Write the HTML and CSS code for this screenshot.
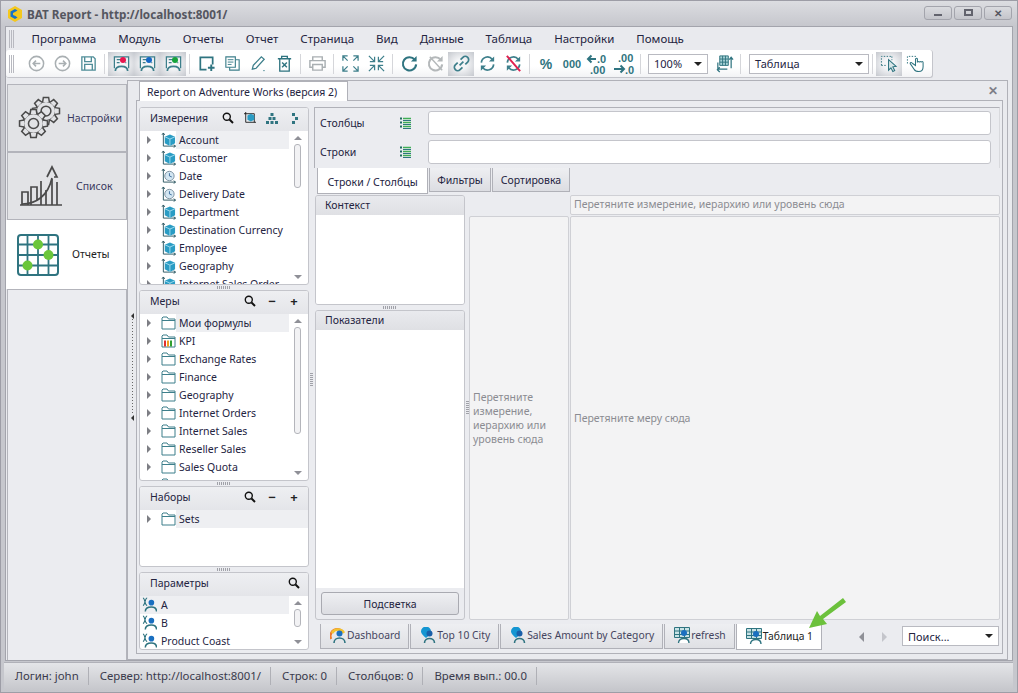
FILE: index.html
```html
<!DOCTYPE html>
<html lang="en">
<head>
  <meta charset="UTF-8" />
  <title>BAT Report</title>
  <link rel="stylesheet" href="styles.css">
</head>
<body>
  <svg class="defs" width="0" height="0">
    <defs>
      <symbol id="i-back" viewBox="0 0 20 20"><circle cx="10" cy="10" r="7.5" fill="none" stroke="#a9afb2" stroke-width="1.6"/><path d="M14 10H6.5M9.5 7L6.5 10l3 3" fill="none" stroke="#a9afb2" stroke-width="1.6"/></symbol>
      <symbol id="i-forward" viewBox="0 0 20 20"><circle cx="10" cy="10" r="7.5" fill="none" stroke="#a9afb2" stroke-width="1.6"/><path d="M6 10h7.5M10.5 7l3 3-3 3" fill="none" stroke="#a9afb2" stroke-width="1.6"/></symbol>
      <symbol id="i-save" viewBox="0 0 20 20"><path d="M3 3h12l2 2v12H3zM6 3v5h7V3M6 17v-6h8v6" fill="none" stroke="#4f8d98" stroke-width="1.4"/></symbol>
      <symbol id="i-sheet" viewBox="0 0 20 20"><path d="M2.500 15V3h15v12M5 6h5M5 9h3M15 9h-1" fill="none" stroke="#3d7f8b" stroke-width="1.3"/><path d="M3.500 18c0-4 3-5 6.500-5s6.500 1 6.500 5" fill="none" stroke="#3d7f8b" stroke-width="1.8"/></symbol>
      <symbol id="i-new" viewBox="0 0 20 20"><path d="M10 16.500H3.500V3.500h13V11" fill="none" stroke="#2f7480" stroke-width="1.8"/><path d="M15 11v7M11.500 14.500h7" fill="none" stroke="#2f7480" stroke-width="2"/></symbol>
      <symbol id="i-copy" viewBox="0 0 20 20"><path d="M3 3h10v11H3z" fill="none" stroke="#3d7f8b" stroke-width="1.2"/><path d="M13 6h4v11H7v-3" fill="none" stroke="#3d7f8b" stroke-width="1.2"/><path d="M5 6h6M5 8.500h6M5 11h4" stroke="#3d7f8b"/></symbol>
      <symbol id="i-edit" viewBox="0 0 20 20"><path d="M3.500 16l1-4L13 3l3 2.500L7.500 15z" fill="none" stroke="#3d7f8b" stroke-width="1.3"/><path d="M15 17.500h1.500" stroke="#3d7f8b"/></symbol>
      <symbol id="i-delete" viewBox="0 0 20 20"><path d="M5 5v13h10V5M3 5h14M7 5V2.500h6V5" fill="none" stroke="#2f7480" stroke-width="1.4"/><path d="M7.500 9l5 5M12.500 9l-5 5" stroke="#2f7480" stroke-width="1.500"/></symbol>
      <symbol id="i-print" viewBox="0 0 20 20"><path d="M5 7V3h10v4M5 14H2V7h16v7h-3M5 11h10v6H5z" fill="none" stroke="#a9afb2" stroke-width="1.5"/></symbol>
      <symbol id="i-expand" viewBox="0 0 20 20"><path d="M2 7V2h5M2 2l5 5M18 7V2h-5M18 2l-5 5M2 13v5h5M2 18l5-5M18 13v5h-5M18 18l-5-5" fill="none" stroke="#3d7f8b" stroke-width="1.300"/></symbol>
      <symbol id="i-collapse" viewBox="0 0 20 20"><path d="M3 8h5V3M2 2l6 6M17 8h-5V3M18 2l-6 6M3 12h5v5M2 18l6-6M17 12h-5v5M18 18l-6-6" fill="none" stroke="#3d7f8b" stroke-width="1.300"/></symbol>
      <symbol id="i-refresh" viewBox="0 0 20 20"><path d="M15.500 6A7 7 0 1 0 17 11" fill="none" stroke="#2f7480" stroke-width="2.200"/><path d="M17.500 2v6h-6z" fill="#2f7480"/></symbol>
      <symbol id="i-refresh-off" viewBox="0 0 20 20"><path d="M15.500 6A7 7 0 1 0 17 11" fill="none" stroke="#b4b8ba" stroke-width="2.200"/><path d="M17.500 2v6h-6z" fill="#b4b8ba"/><path d="M4 3l13 14" stroke="#b4b8ba" stroke-width="1.500"/></symbol>
      <symbol id="i-link" viewBox="0 0 20 20"><path d="M8 12l4-4M9 6l2.500-2.500a3 3 0 0 1 5 5L14 11M11 14l-2.500 2.500a3 3 0 0 1-5-5L6 9" fill="none" stroke="#3d7f8b" stroke-width="1.800"/></symbol>
      <symbol id="i-sync" viewBox="0 0 20 20"><path d="M3.500 9A6.500 6.500 0 0 1 15 5.500M16.500 11A6.500 6.500 0 0 1 5 14.500" fill="none" stroke="#3d7f8b" stroke-width="1.800"/><path d="M17 2.500V8h-5.500zM3 17.500V12h5.500z" fill="#3d7f8b"/></symbol>
      <symbol id="i-sync-off" viewBox="0 0 20 20"><path d="M3.500 9A6.500 6.500 0 0 1 15 5.500M16.500 11A6.500 6.500 0 0 1 5 14.500" fill="none" stroke="#3d7f8b" stroke-width="1.800"/><path d="M17 2.500V8h-5.500zM3 17.500V12h5.500z" fill="#3d7f8b"/><path d="M3 2l14 16" stroke="#e0204f" stroke-width="2"/></symbol>
      <symbol id="i-dec-more" viewBox="0 0 24 22"><path d="M10 6H2M5.500 2.500L2 6l3.500 3.500" fill="none" stroke="#2f7480" stroke-width="2"/><text x="11" y="10" class="svg-num">.0</text><text x="4" y="21" class="svg-num">.00</text></symbol>
      <symbol id="i-dec-less" viewBox="0 0 24 22"><text x="6" y="9" class="svg-num">.00</text><path d="M2 16h10M8.500 12.500L12 16l-3.500 3.500" fill="none" stroke="#2f7480" stroke-width="2"/><text x="13" y="21" class="svg-num">.0</text></symbol>
      <symbol id="i-swap" viewBox="0 0 20 20"><path d="M5 2h9v10H5zM8 2v10M11 2v10M5 5.300h9M5 8.600h9" fill="#a9d4d8" stroke="#2f7480"/><path d="M3 9v7h10M5 14l-2.500 2.500L5 19" fill="none" stroke="#2f7480" stroke-width="1.300"/><path d="M17 15V4M15 6l2-2.500L19 6" fill="none" stroke="#2f7480" stroke-width="1.300"/></symbol>
      <symbol id="i-select" viewBox="0 0 20 20"><path d="M1.500 12V2.500h11" fill="none" stroke="#2f7480" stroke-dasharray="1.500 1.500"/><path d="M1.500 12h5M12.500 2.500v4" fill="none" stroke="#2f7480" stroke-dasharray="1.500 1.500"/><path d="M9 6l8 7-3.500.5 2 4-2 1-2-4L9 17z" fill="#d9e6e8" stroke="#2f7480" stroke-width="1.100"/></symbol>
      <symbol id="i-hand" viewBox="0 0 20 20"><path d="M1.500 10V2.500h9" fill="none" stroke="#2f7480" stroke-dasharray="1.500 1.500"/><path d="M7 10c-2-2-3.500-.5-2 1l3.500 5c1 2 3 2.500 5 2.500 3 0 4.500-2 4.500-5V9c0-1.500-2-1.500-2 0 0-1.500-2-1.500-2 0 0-1.500-2-1.500-2 0V5.500c0-1.500-2-1.500-2 0V12z" fill="#fff" stroke="#2f7480" stroke-width="1.100"/></symbol>
      <symbol id="i-gear" viewBox="-20 -20 40 40">
        <circle r="13" fill="#e2e3e6" stroke="#4a4a4a" stroke-width="2"/>
        <g id="teeth">
          <path id="tooth" d="M-4.500-12L-3.500-18H3.500L4.500-12" fill="#e2e3e6" stroke="#4a4a4a" stroke-width="2"/>
          <use href="#tooth" transform="rotate(45)"/><use href="#tooth" transform="rotate(90)"/><use href="#tooth" transform="rotate(135)"/>
          <use href="#tooth" transform="rotate(180)"/><use href="#tooth" transform="rotate(225)"/><use href="#tooth" transform="rotate(270)"/><use href="#tooth" transform="rotate(315)"/>
        </g>
        <circle r="6.500" fill="none" stroke="#4a4a4a" stroke-width="2"/>
      </symbol>
      <symbol id="i-cube" viewBox="0 0 16 17"><path d="M2.500 1v14h13M1 3l1.500-2L4 3M13.500 13.500l2 1.500-2 1.500" fill="none" stroke="#2a5560"/><path d="M9.500 2.500L15 5v7l-5.500 3L4 12V5z" fill="#2a9cc4"/><path d="M4 5l5.500 2.500L15 5M9.500 7.500V15" fill="none" stroke="#a5dcee"/></symbol>
      <symbol id="i-clock" viewBox="0 0 16 17"><path d="M2.500 1v14h13M1 3l1.500-2L4 3M13.500 13.500l2 1.500-2 1.500" fill="none" stroke="#2a5560"/><circle cx="9" cy="8.500" r="5" fill="#d3e6f2" stroke="#7b8f9e"/><path d="M9 5.500v3l2.500 1" fill="none" stroke="#3e6f9e"/></symbol>
      <symbol id="i-folder" viewBox="0 0 15 15"><path d="M1 13.500V2.500l1-1h4l1.500 2H14v10zM1 5h13" fill="#fff" stroke="#3d7f8b"/></symbol>
      <symbol id="i-kpi" viewBox="0 0 15 15"><path d="M1 13.500V2.500l1-1h4l1.500 2H14v10zM1 5h13" fill="#fff" stroke="#3d7f8b"/><path d="M3 7h2v6H3z" fill="#e03030"/><path d="M6 7h2v6H6z" fill="#f0a020"/><path d="M9 7h2v6H9z" fill="#30a030"/></symbol>
      <symbol id="i-param" viewBox="0 0 16 16"><path d="M1 .5c2.500 0 1.500 8 4.500 8M5.500 .5c-2.500 0-2 8-4.500 8" fill="none" stroke="#2f7480" stroke-width="1.200"/><circle cx="10" cy="5.500" r="3" fill="#1a6fc0"/><path d="M3.500 15c0-3.500 3-5 6.500-5s5.500 1.500 5.500 5" fill="none" stroke="#2f7480" stroke-width="1.600"/></symbol>
      <symbol id="i-fields" viewBox="0 0 12 12"><path d="M1 .5h2v2H1zM1 4.500h2v2H1zM1 8.500h2v2H1z" fill="#1d6b60"/><path d="M4 1.500h8M4 5.500h8M4 9.500h8" stroke="#3fae55" stroke-width="1.500"/><path d="M4 3.500h8M4 7.500h8M4 11.500h8" stroke="#2f7480"/></symbol>
      <symbol id="i-search" viewBox="0 0 12 12"><circle cx="4.800" cy="4.800" r="3.500" fill="none" stroke="#111" stroke-width="1.400"/><path d="M7.500 7.500l3.500 3.500" stroke="#111" stroke-width="2"/></symbol>
      <symbol id="i-cube-tool" viewBox="0 0 14 14"><path d="M2 0v12h12M0 2h12v10" fill="none" stroke="#111"/><path d="M8 2l4 2v5l-4 2-4-2V4z" fill="#2a9cc4"/></symbol>
      <symbol id="i-tree" viewBox="0 0 12 12"><path d="M4.500 1h3v3h-3zM2.500 5h3v3h-3zM6.500 5h3v3h-3zM0 9h3v3H0zM4.500 9h3v3h-3zM9 9h3v3H9z" fill="#2f7480"/></symbol>
      <symbol id="i-dots" viewBox="0 0 12 12"><path d="M4 1h3v3H4zM7 5h3v3H7zM4 9h3v3H4z" fill="#2f7480"/></symbol>
      <symbol id="i-dash" viewBox="0 0 16 16"><path d="M1 12a7 7 0 0 1 12-7" fill="none" stroke="#ef7a2a" stroke-width="2.500"/><path d="M2 6a7 7 0 0 1 12 0" fill="none" stroke="#f2c230" stroke-width="2.500"/><circle cx="9.500" cy="6.500" r="3" fill="#1a6fc0"/><path d="M4 16c0-3 2.500-5 5.500-5s5.500 2 5.500 5" fill="none" stroke="#2f7480" stroke-width="1.600"/></symbol>
      <symbol id="i-pin" viewBox="0 0 16 16"><path d="M6 11C3 8.500 1 6.500 1 4.500a5 5 0 0 1 10 0C11 6.500 9 8.500 6 11z" fill="#1596d2"/><circle cx="9.500" cy="6.500" r="3" fill="#1a5fa8"/><path d="M4.500 16c0-3 2.500-4.500 5-4.500s5 1.500 5 4.500" fill="none" stroke="#2f7480" stroke-width="1.600"/></symbol>
      <symbol id="i-table" viewBox="0 0 16 16"><path d="M.5.500h15v10H.5zM.5 4h15M.5 7.500h15M5.500.5v10M10.500.5v10" fill="#c9e3e6" stroke="#2f7480"/><circle cx="10" cy="6" r="3" fill="#1a6fc0"/><path d="M4.500 16c0-3 2.500-4.500 5.500-4.500s5 1.500 5 4.500" fill="#fff" stroke="#2f7480" stroke-width="1.400"/></symbol>
    </defs>
  </svg>

  <header class="titlebar">
    <svg class="app-logo" viewBox="0 0 14 16"><path d="M7 0l7 4v8l-7 4-7-4V4z" fill="#f4c81e"/><path d="M9.500 4.500L7 3 2.500 5.500v5L7 13l2.500-1.500-2-1.500L5 9V7l2-1z" fill="#1773c8"/></svg>
    <span class="app-title">BAT Report - http://localhost:8001/</span>
    <div class="win-buttons">
      <button class="win-btn"><span class="win-min"></span></button>
      <button class="win-btn"><span class="win-max"></span></button>
      <button class="win-btn win-close">✕</button>
    </div>
  </header>

  <div class="frame">
    <nav class="menu">
      <span class="grip"></span>
      <a>Программа</a><a>Модуль</a><a>Отчеты</a><a>Отчет</a><a>Страница</a><a>Вид</a><a>Данные</a><a>Таблица</a><a>Настройки</a><a>Помощь</a>
    </nav>

    <div class="toolbar">
      <span class="grip"></span>
      <button class="tb"><svg><use href="#i-back"/></svg></button>
      <button class="tb"><svg><use href="#i-forward"/></svg></button>
      <button class="tb"><svg><use href="#i-save"/></svg></button>
      <i class="sep"></i>
      <button class="tb on"><svg><use href="#i-sheet"/></svg><b class="dot red"></b></button>
      <button class="tb on"><svg><use href="#i-sheet"/></svg><b class="dot blue"></b></button>
      <button class="tb on"><svg><use href="#i-sheet"/></svg><b class="dot green"></b></button>
      <i class="sep"></i>
      <button class="tb"><svg><use href="#i-new"/></svg></button>
      <button class="tb"><svg><use href="#i-copy"/></svg></button>
      <button class="tb"><svg><use href="#i-edit"/></svg></button>
      <button class="tb"><svg><use href="#i-delete"/></svg></button>
      <i class="sep"></i>
      <button class="tb"><svg><use href="#i-print"/></svg></button>
      <i class="sep"></i>
      <button class="tb"><svg><use href="#i-expand"/></svg></button>
      <button class="tb"><svg><use href="#i-collapse"/></svg></button>
      <i class="sep"></i>
      <button class="tb"><svg><use href="#i-refresh"/></svg></button>
      <button class="tb"><svg><use href="#i-refresh-off"/></svg></button>
      <button class="tb on"><svg><use href="#i-link"/></svg></button>
      <button class="tb"><svg><use href="#i-sync"/></svg></button>
      <button class="tb"><svg><use href="#i-sync-off"/></svg></button>
      <i class="sep"></i>
      <button class="tb tb-text pct">%</button>
      <button class="tb tb-text">000</button>
      <button class="tb tb-wide"><svg><use href="#i-dec-more"/></svg></button>
      <button class="tb tb-wide"><svg><use href="#i-dec-less"/></svg></button>
      <i class="sep"></i>
      <div class="combo zoom-combo"><span>100%</span><i class="caret"></i></div>
      <button class="tb swap"><svg><use href="#i-swap"/></svg></button>
      <i class="sep"></i>
      <div class="combo view-combo"><span>Таблица</span><i class="caret"></i></div>
      <i class="sep"></i>
      <button class="tb on"><svg><use href="#i-select"/></svg></button>
      <button class="tb"><svg><use href="#i-hand"/></svg></button>
    </div>

    <div class="workspace">
      <aside class="side-nav">
        <div class="nav-item">
          <svg class="nav-gears" viewBox="0 0 44 44">
            <use href="#i-gear" x="13" y="0" width="30" height="30"/>
            <use href="#i-gear" x="0" y="12" width="31" height="31"/>
          </svg>
          <span>Настройки</span>
        </div>
        <div class="nav-item">
          <svg class="nav-chart" viewBox="0 0 44 44" fill="none" stroke="#4a4a4a" stroke-width="1.700">
            <path d="M1 41h42"/>
            <path d="M3 41V28h6v13M12 41V23h6v13M22 41V17"/>
            <path d="M33 41V15M27 41V26M38 41V18"/>
            <path d="M3 40c14 0 26-8 30-26"/>
            <path d="M28 13l5-10 5 10h-3"/>
          </svg>
          <span>Список</span>
        </div>
        <div class="nav-item active">
          <svg class="nav-grid" viewBox="0 0 42 42">
            <rect x="1" y="1" width="40" height="40" rx="3" fill="none" stroke="#2f7480" stroke-width="2"/>
            <path d="M10.500 1v40M21 1v40M31.500 1v40M1 10.500h40M1 21h40M1 31.500h40" stroke="#2f7480" stroke-width="1.800"/>
            <circle cx="21" cy="10.500" r="5" fill="#6bc63a"/><circle cx="31.500" cy="21" r="5" fill="#6bc63a"/><circle cx="10.500" cy="31.500" r="5" fill="#6bc63a"/>
          </svg>
          <span>Отчеты</span>
        </div>
        <div class="nav-rest"></div>
      </aside>

      <div class="main-area">
        <div class="collapse-bar"><i class="tri-l"></i><span class="dots"></span><i class="tri-l"></i></div>
        <div class="doc-wrap">
          <div class="doc-tabs">
            <div class="doc-tab">Report on Adventure Works (версия 2)</div>
            <span class="doc-close">✕</span>
          </div>
          <div class="doc">
            <section class="left-col">
              <div class="panel dims">
                <div class="panel-head"><span>Измерения</span>
                  <svg class="tool"><use href="#i-search"/></svg><svg class="tool"><use href="#i-cube-tool"/></svg><svg class="tool"><use href="#i-tree"/></svg><svg class="tool"><use href="#i-dots"/></svg>
                </div>
                <div class="panel-body">
                  <ul class="tree">
                    <li class="sel"><i class="arrow"></i><svg class="node"><use href="#i-cube"/></svg><span>Account</span></li>
                    <li><i class="arrow"></i><svg class="node"><use href="#i-cube"/></svg><span>Customer</span></li>
                    <li><i class="arrow"></i><svg class="node"><use href="#i-clock"/></svg><span>Date</span></li>
                    <li><i class="arrow"></i><svg class="node"><use href="#i-clock"/></svg><span>Delivery Date</span></li>
                    <li><i class="arrow"></i><svg class="node"><use href="#i-cube"/></svg><span>Department</span></li>
                    <li><i class="arrow"></i><svg class="node"><use href="#i-cube"/></svg><span>Destination Currency</span></li>
                    <li><i class="arrow"></i><svg class="node"><use href="#i-cube"/></svg><span>Employee</span></li>
                    <li><i class="arrow"></i><svg class="node"><use href="#i-cube"/></svg><span>Geography</span></li>
                    <li><i class="arrow"></i><svg class="node"><use href="#i-cube"/></svg><span>Internet Sales Order</span></li>
                  </ul>
                  <div class="scroll"><i class="up"></i><b class="thumb t-dims"></b><i class="down"></i></div>
                </div>
              </div>
              <i class="hgrip"></i>
              <div class="panel measures">
                <div class="panel-head"><span>Меры</span>
                  <svg class="tool"><use href="#i-search"/></svg><em class="tool-sign">−</em><em class="tool-sign">+</em>
                </div>
                <div class="panel-body">
                  <ul class="tree">
                    <li class="sel"><i class="arrow"></i><svg class="node"><use href="#i-folder"/></svg><span>Мои формулы</span></li>
                    <li><i class="arrow"></i><svg class="node"><use href="#i-kpi"/></svg><span>KPI</span></li>
                    <li><i class="arrow"></i><svg class="node"><use href="#i-folder"/></svg><span>Exchange Rates</span></li>
                    <li><i class="arrow"></i><svg class="node"><use href="#i-folder"/></svg><span>Finance</span></li>
                    <li><i class="arrow"></i><svg class="node"><use href="#i-folder"/></svg><span>Geography</span></li>
                    <li><i class="arrow"></i><svg class="node"><use href="#i-folder"/></svg><span>Internet Orders</span></li>
                    <li><i class="arrow"></i><svg class="node"><use href="#i-folder"/></svg><span>Internet Sales</span></li>
                    <li><i class="arrow"></i><svg class="node"><use href="#i-folder"/></svg><span>Reseller Sales</span></li>
                    <li><i class="arrow"></i><svg class="node"><use href="#i-folder"/></svg><span>Sales Quota</span></li>
                    <li><i class="arrow"></i><svg class="node"><use href="#i-folder"/></svg><span></span></li>
                  </ul>
                  <div class="scroll"><i class="up"></i><b class="thumb t-measures"></b><i class="down"></i></div>
                </div>
              </div>
              <i class="hgrip"></i>
              <div class="panel sets">
                <div class="panel-head"><span>Наборы</span>
                  <svg class="tool"><use href="#i-search"/></svg><em class="tool-sign">−</em><em class="tool-sign">+</em>
                </div>
                <div class="panel-body">
                  <ul class="tree">
                    <li class="sel"><i class="arrow"></i><svg class="node"><use href="#i-folder"/></svg><span>Sets</span></li>
                  </ul>
                </div>
              </div>
              <i class="hgrip"></i>
              <div class="panel params">
                <div class="panel-head"><span>Параметры</span>
                  <svg class="tool"><use href="#i-search"/></svg>
                </div>
                <div class="panel-body">
                  <ul class="tree flat">
                    <li class="sel"><svg class="node"><use href="#i-param"/></svg><span>A</span></li>
                    <li><svg class="node"><use href="#i-param"/></svg><span>B</span></li>
                    <li><svg class="node"><use href="#i-param"/></svg><span>Product Coast</span></li>
                  </ul>
                  <div class="scroll"><i class="up"></i><b class="thumb t-params"></b><i class="down"></i></div>
                </div>
              </div>
            </section>

            <i class="vgrip col-grip"></i>

            <section class="center-col">
              <div class="fields">
                <div class="field-row"><label>Столбцы</label><svg class="field-ico"><use href="#i-fields"/></svg><div class="field-box"></div></div>
                <div class="field-row"><label>Строки</label><svg class="field-ico"><use href="#i-fields"/></svg><div class="field-box"></div></div>
              </div>
              <div class="sub-tabs">
                <div class="sub-tab active">Строки / Столбцы</div>
                <div class="sub-tab filter-tab">Фильтры</div>
                <div class="sub-tab sort-tab">Сортировка</div>
              </div>
              <div class="pivot">
                <div class="pivot-left">
                  <div class="box context"><div class="box-head">Контекст</div><div class="box-body"></div></div>
                  <i class="hgrip"></i>
                  <div class="box indicators"><div class="box-head">Показатели</div><div class="box-body"></div>
                    <button class="highlight">Подсветка</button>
                  </div>
                </div>
                <i class="vgrip pivot-grip"></i>
                <div class="pivot-rows">
                  <div class="drop-top empty"></div>
                  <div class="drop row-drop">Перетяните измерение, иерархию или уровень сюда</div>
                </div>
                <div class="pivot-data">
                  <div class="drop-top">Перетяните измерение, иерархию или уровень сюда</div>
                  <div class="drop data-drop">Перетяните меру сюда</div>
                </div>
              </div>
              <div class="sheet-tabs">
                <div class="sheet"><svg><use href="#i-dash"/></svg>Dashboard</div>
                <div class="sheet"><svg><use href="#i-pin"/></svg>Top 10 City</div>
                <div class="sheet"><svg><use href="#i-pin"/></svg>Sales Amount by Category</div>
                <div class="sheet"><svg><use href="#i-table"/></svg>refresh</div>
                <div class="sheet active"><svg><use href="#i-table"/></svg>Таблица 1</div>
                <div class="sheet-nav"><i class="tri-l big"></i><i class="tri-r big"></i></div>
                <div class="combo search-combo"><span>Поиск...</span><i class="caret"></i></div>
              </div>
            </section>
          </div>
        </div>
      </div>
    </div>
  </div>

  <footer class="statusbar">
    <span>Логин: john</span>
    <span>Сервер: http://localhost:8001/</span>
    <span>Строк: 0</span>
    <span>Столбцов: 0</span>
    <span>Время вып.: 00.0</span>
  </footer>

  <svg class="callout" viewBox="0 0 40 34"><path d="M36 2L13 20l-3-5-8 17 18-4-4-5L39 6z" fill="#6cc13c"/></svg>
</body>
</html>
```

FILE: styles.css
```css
* {
  box-sizing: border-box;
}

body {
  margin: 0;
  width: 1018px;
  height: 693px;
  position: relative;
  overflow: hidden;
  font-family: "Noto Sans", sans-serif;
  font-size: 10.500px;
  color: #24243f;
  background: #c6c7cd;
  border: 1px solid #9d9da6;
  display: flex;
  flex-direction: column;
}

ul {
  list-style: none;
  margin: 0;
  padding: 0;
}

button {
  font: inherit;
  color: inherit;
}

.defs {
  position: absolute;
}

.svg-num {
  font-family: "Liberation Sans", sans-serif;
  font-size: 11px;
  font-weight: bold;
  fill: #2f7480;
}

/* title bar */
.titlebar {
  height: 25px;
  flex: none;
  display: flex;
  align-items: center;
  padding: 0 5px 0 7px;
  background: linear-gradient(#dcdde1, #c6c7cd);
}

.app-logo {
  width: 14px;
  height: 16px;
  margin-right: 5px;
}

.app-title {
  font-size: 11.700px;
  font-weight: bold;
  color: #555660;
}

.win-buttons {
  margin-left: auto;
  display: flex;
  gap: 2px;
  padding-bottom: 2px;
}

.win-btn {
  width: 28px;
  height: 14px;
  padding: 0;
  border: 1px solid #a3a4ac;
  border-radius: 3px;
  background: linear-gradient(#dadbdf, #c4c5cb);
  display: flex;
  align-items: center;
  justify-content: center;
  color: #555660;
  font-size: 10px;
  font-weight: bold;
  line-height: 1;
}

.win-min {
  width: 8px;
  height: 2px;
  margin-top: 4px;
  background: #62636d;
}

.win-max {
  width: 9px;
  height: 7px;
  border: 2px solid #62636d;
}

/* main frame */
.frame {
  height: 635px;
  flex: none;
  margin: 0 4px;
  border: 1px solid #a3a4ac;
  background: #e9eaee;
}

.grip {
  width: 5px;
  height: 18px;
  flex: none;
  background: repeating-linear-gradient(90deg, #b8b9c0 0 1px, transparent 1px 2px);
}

.menu {
  height: 23px;
  display: flex;
  align-items: center;
  padding-left: 3px;
  font-size: 11.500px;
}

.menu .grip {
  margin-right: 6.500px;
}

.menu a {
  padding: 0 11px;
}

.toolbar {
  width: 927px;
  height: 28px;
  display: flex;
  align-items: center;
  padding-left: 3px;
  background: linear-gradient(#fff 60%, #f2f3f5);
  border-radius: 3px;
  border-right: 1px solid #c4c5cb;
  border-bottom: 1px solid #c4c5cb;
}

.toolbar .grip {
  margin-right: 9px;
}

.tb {
  position: relative;
  width: 26px;
  height: 24px;
  padding: 0;
  flex: none;
  border: 0;
  background: none;
  display: flex;
  align-items: center;
  justify-content: center;
}

.tb svg {
  width: 19px;
  height: 19px;
}

.tb.tb-wide svg {
  width: 24px;
  height: 22px;
}

.tb.on {
  background: radial-gradient(ellipse at center, #f4f5f7 30%, #c5c8ce);
}

.tb-text {
  font-family: "Liberation Sans", sans-serif;
  font-weight: bold;
  font-size: 11px;
  color: #2f7480;
}

.pct {
  font-size: 14px;
}

.dot {
  position: absolute;
  top: 5px;
  left: 12px;
  width: 6px;
  height: 6px;
  border-radius: 50%;
}

.red {
  background: #e8174f;
}

.blue {
  background: #1767c4;
}

.green {
  background: #16a33a;
}

.sep {
  width: 1px;
  height: 20px;
  margin: 0 3px;
  flex: none;
  background: #d5d6da;
}

.combo {
  height: 20px;
  flex: none;
  display: flex;
  align-items: center;
  justify-content: space-between;
  padding: 0 5px;
  background: #fff;
  border: 1px solid #b9bac1;
  font-size: 11px;
}

.caret {
  width: 0;
  height: 0;
  border: 4px solid transparent;
  border-top: 4px solid #222;
  border-bottom: 0;
}

.zoom-combo {
  width: 60px;
  margin-left: 4px;
}

.swap {
  margin-left: 3px;
}

.view-combo {
  width: 120px;
  margin-left: 5px;
}

/* workspace */
.workspace {
  height: 580px;
  margin-top: 2px;
  margin-right: 4px;
  display: flex;
}

.side-nav {
  width: 121px;
  flex: none;
  padding-top: 4px;
  display: flex;
  flex-direction: column;
}

.nav-item {
  height: 68px;
  margin-left: 1px;
  display: flex;
  align-items: center;
  background: #e2e3e6;
  border: 1px solid #b3b4bb;
  color: #3a3a60;
}

.nav-item span {
  padding-bottom: 1px;
}

.nav-item.active {
  height: 69px;
  margin-left: 0;
  background: #fff;
  border: 0;
  color: #222;
}

.nav-gears {
  width: 44px;
  height: 44px;
  margin-left: 10px;
  margin-right: 5px;
}

.nav-chart {
  width: 44px;
  height: 44px;
  margin-left: 11px;
  margin-right: 13px;
}

.nav-grid {
  width: 42px;
  height: 42px;
  margin-left: 11px;
  margin-right: 13px;
}

.nav-rest {
  flex: 1;
  margin-left: 1px;
  background: #ebecf0;
  border: 1px solid #b3b4bb;
  border-bottom: 0;
}

.main-area {
  flex: 1;
  min-width: 0;
  display: flex;
  border: 1px solid #b0b1b8;
}

.collapse-bar {
  width: 8px;
  flex: none;
  display: flex;
  flex-direction: column;
  align-items: center;
  padding-top: 232px;
  padding-left: 1px;
}

.tri-l {
  width: 0;
  height: 0;
  flex: none;
  border: 3px solid transparent;
  border-right: 3px solid #333;
  border-left: 0;
}

.tri-r {
  width: 0;
  height: 0;
  border: 5px solid transparent;
  border-left: 5px solid #c4c5cb;
  border-right: 0;
}

.tri-l.big {
  border-width: 5px;
  border-left: 0;
  border-right-color: #8f9097;
}

.dots {
  width: 1px;
  height: 96px;
  background: repeating-linear-gradient(#666 0 1px, transparent 1px 3px);
}

.doc-wrap {
  flex: 1;
  min-width: 0;
  display: flex;
  flex-direction: column;
  padding-right: 4px;
}

.doc-tabs {
  height: 19px;
  display: flex;
  justify-content: space-between;
}

.doc-tab {
  margin-left: 3px;
  width: 209px;
  height: 20px;
  padding: 3px 0 0 7px;
  background: #fff;
  border: 1px solid #b0b1b8;
  border-bottom: 0;
  position: relative;
  z-index: 1;
  white-space: nowrap;
}

.doc-close {
  font-size: 12px;
  font-weight: bold;
  color: #7e7f88;
  padding-right: 5px;
  line-height: 19px;
}

.doc {
  height: 554px;
  display: flex;
  padding: 6px 2px 0;
  border: 1px solid #b0b1b8;
  background: #ebecf0;
}

.left-col {
  width: 170px;
  flex: none;
  display: flex;
  flex-direction: column;
}

.hgrip {
  height: 5px;
  flex: none;
  background: repeating-linear-gradient(90deg, #a0a1a8 0 1px, transparent 1px 2px) center / 14px 3px no-repeat;
}

.vgrip {
  flex: none;
  background: repeating-linear-gradient(#a0a1a8 0 1px, transparent 1px 2px) center / 3px 14px no-repeat;
}

.col-grip {
  width: 5px;
}

.pivot-grip {
  width: 4px;
}

.panel {
  display: flex;
  flex-direction: column;
  background: #fff;
  border: 1px solid #c4c5cb;
  border-radius: 3px;
  overflow: hidden;
}

.dims {
  height: 178px;
}

.measures {
  height: 191px;
}

.sets {
  height: 81px;
}

.params {
  height: 78px;
}

.panel-head {
  height: 23px;
  flex: none;
  display: flex;
  align-items: center;
  gap: 10px;
  padding: 0 8px 3px 10px;
  background: linear-gradient(#eeeff2, #e4e5e9);
}

.panel-head span {
  margin-right: auto;
}

.tool {
  width: 12px;
  height: 12px;
  flex: none;
}

.tool-sign {
  width: 12px;
  text-align: center;
  font-style: normal;
  font-weight: bold;
  font-size: 13px;
  color: #222;
}

.panel-body {
  flex: 1;
  min-height: 0;
  display: flex;
  overflow: hidden;
}

.tree {
  flex: 1;
  min-width: 0;
}

.tree li {
  height: 18px;
  display: flex;
  align-items: center;
  white-space: nowrap;
  padding-left: 7px;
}

.tree li span {
  flex: 1;
  height: 18px;
  line-height: 19px;
  padding-left: 3px;
}

.tree li.sel span {
  background: #eeeff2;
}

.tree.flat li {
  padding-left: 2px;
}

.tree.flat li.sel {
  background: #eeeff2;
}

.tree.flat li span {
  padding-left: 4px;
}

.arrow {
  width: 0;
  height: 0;
  flex: none;
  margin-right: 10px;
  border: 4px solid transparent;
  border-left: 4px solid #7d7e84;
  border-right: 0;
}

.node {
  width: 15px;
  height: 16px;
  flex: none;
}

.scroll {
  width: 17px;
  margin-right: 2px;
  flex: none;
  display: flex;
  flex-direction: column;
  align-items: center;
  padding: 5px 0;
}

.up,
.down {
  width: 0;
  height: 0;
  flex: none;
  border: 4px solid transparent;
}

.up {
  border-top: 0;
  border-bottom: 4px solid #8f9097;
}

.down {
  margin-top: auto;
  border-bottom: 0;
  border-top: 4px solid #8f9097;
}

.thumb {
  width: 7px;
  margin-top: 4px;
  flex: none;
  background: #f2f2f4;
  border: 1px solid #b4b5bb;
  border-radius: 3px;
}

.t-dims {
  height: 44px;
}

.t-measures {
  height: 107px;
}

.t-params {
  height: 18px;
}

.center-col {
  flex: 1;
  min-width: 0;
}

.fields {
  height: 61px;
  padding: 3px 8px 0 5px;
  border: 1px solid #b0b1b8;
  border-right-color: #d8d9dd;
  border-bottom: 0;
}

.field-row {
  height: 29px;
  display: flex;
  align-items: flex-start;
}

.field-row label {
  width: 79px;
  flex: none;
  line-height: 24px;
}

.field-ico {
  width: 12px;
  height: 12px;
  margin-top: 6px;
  margin-right: 17px;
  flex: none;
}

.field-box {
  flex: 1;
  height: 24px;
  background: #fff;
  border: 1px solid #c4c5cb;
  border-radius: 3px;
}

.sub-tabs {
  height: 26px;
  display: flex;
  gap: 1px;
  padding-left: 3px;
}

.sub-tab {
  height: 24px;
  padding-top: 5px;
  text-align: center;
  background: linear-gradient(#eeeff2, #dcdde2);
  border: 1px solid #b0b1b8;
  border-top: 0;
}

.filter-tab {
  width: 62px;
}

.sort-tab {
  width: 78px;
}

.sub-tab.active {
  width: 111px;
  height: 26px;
  padding-top: 7px;
  background: #fff;
}

.pivot {
  height: 425px;
  margin-top: 1px;
  padding-left: 1px;
  display: flex;
}

.pivot-left {
  width: 150px;
  flex: none;
  display: flex;
  flex-direction: column;
}

.box {
  display: flex;
  flex-direction: column;
  border: 1px solid #c4c5cb;
  border-radius: 3px;
  overflow: hidden;
}

.context {
  height: 110px;
  flex: none;
}

.indicators {
  flex: 1;
}

.box-head {
  height: 19px;
  flex: none;
  padding: 2px 0 0 9px;
  background: linear-gradient(#e9eaee, #dfe0e4);
}

.box-body {
  flex: 1;
  background: #fff;
}

.highlight {
  height: 23px;
  margin: 4px 5px;
  flex: none;
  background: linear-gradient(#eeeff2, #dcdde2);
  border: 1px solid #a9aab1;
  border-radius: 3px;
}

.pivot-rows {
  width: 100px;
  margin-right: 1px;
  flex: none;
  display: flex;
  flex-direction: column;
  gap: 1px;
}

.pivot-data {
  flex: 1;
  min-width: 0;
  display: flex;
  flex-direction: column;
  gap: 1px;
}

.drop-top {
  height: 20px;
  flex: none;
  padding: 1px 3px 0;
  color: #8b8c92;
  background: #f3f3f4;
  border: 1px solid #cfd0d5;
  border-radius: 2px;
  white-space: nowrap;
}

.drop-top.empty {
  visibility: hidden;
}

.drop {
  flex: 1;
  display: flex;
  align-items: center;
  padding: 0 3px;
  color: #8b8c92;
  background: #f3f3f4;
  border: 1px solid #cfd0d5;
  border-radius: 2px;
}

.sheet-tabs {
  height: 27px;
  margin-top: 4px;
  padding: 0 1px 0 6px;
  display: flex;
  align-items: flex-start;
  gap: 1px;
}

.sheet {
  height: 25px;
  flex: none;
  display: flex;
  align-items: center;
  gap: 1px;
  padding: 0 8px 2px 9px;
  font-size: 10.300px;
  color: #44445e;
  background: linear-gradient(#eeeff2, #dfe0e4);
  border: 1px solid #b0b1b8;
  border-top: 0;
  white-space: nowrap;
}

.sheet svg {
  width: 16px;
  height: 16px;
  flex: none;
}

.sheet.active {
  height: 26px;
  color: #222;
  background: #fff;
}

.sheet-nav {
  flex: none;
  height: 25px;
  margin-left: auto;
  display: flex;
  align-items: center;
  gap: 18px;
  padding-right: 14px;
}

.search-combo {
  width: 97px;
  margin-top: 2px;
}

/* status bar */
.statusbar {
  height: 29px;
  margin: 1px 4px 0 3px;
  flex: none;
  display: flex;
  align-items: center;
  padding-bottom: 3px;
  background: linear-gradient(#e4e5e8, #c5c6cb);
  border-top: 1px solid #b0b1b8;
  color: #3a3a4c;
  font-size: 11.400px;
}

.statusbar span {
  height: 18px;
  line-height: 17px;
  padding: 0 9px 0 11px;
  border-right: 1px solid #afb0b6;
}

.callout {
  position: absolute;
  left: 806px;
  top: 595px;
  width: 40px;
  height: 34px;
}
```
